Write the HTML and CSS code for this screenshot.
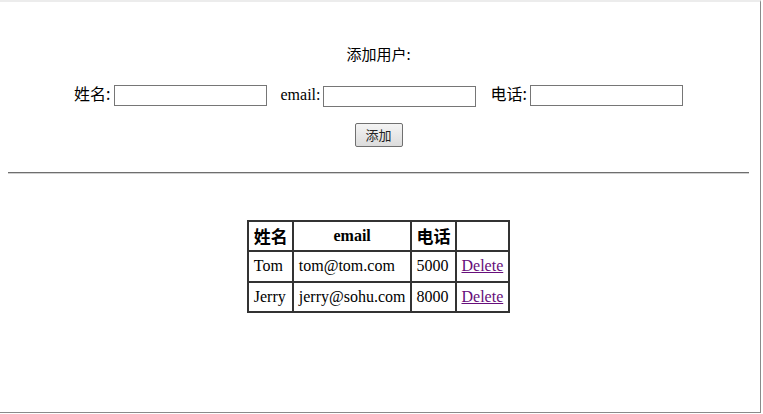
FILE: index.html
```html
<!DOCTYPE html>
<html lang="zh">
<head>
  <meta charset="UTF-8" />
  <title>用户管理</title>
  <link rel="stylesheet" href="styles.css">
</head>
<body>

<div class="frame">
  <div class="add-form">
    <p class="form-title">添加用户:</p>
    <p class="form-fields">
      <label>姓名:<input type="text" /></label>
      <label>email:<input type="text" /></label>
      <label>电话:<input type="text" /></label>
    </p>
    <p class="form-submit"><button>添加</button></p>
  </div>

  <hr />

  <table class="user-table">
    <tr>
      <th>姓名</th>
      <th>email</th>
      <th>电话</th>
      <th></th>
    </tr>
    <tr>
      <td>Tom</td>
      <td>tom@tom.com</td>
      <td>5000</td>
      <td><a href="#">Delete</a></td>
    </tr>
    <tr>
      <td>Jerry</td>
      <td>jerry@sohu.com</td>
      <td>8000</td>
      <td><a href="#">Delete</a></td>
    </tr>
  </table>
</div>

</body>
</html>
```

FILE: styles.css
```css
body {
  margin: 0;
  font-family: "Liberation Serif", "Noto Sans CJK SC", serif;
  font-size: 16px;
  color: #000;
  background-color: #fff;
}

.frame {
  box-sizing: border-box;
  width: 761px;
  height: 413px;
  padding: 0 11px 0 8px;
  border-top: 2px solid #ececec;
  border-right: 1px solid #8a8a8a;
  border-bottom: 1px solid #8a8a8a;
}

.add-form {
  text-align: center;
}

.form-title {
  margin: 42px 0 0;
  line-height: 20px;
  font-family: "Noto Sans CJK SC", sans-serif;
  font-size: 15px;
}

.form-fields {
  margin: 18px 0 0;
  line-height: 22px;
}

.form-fields label {
  margin: 0 5px;
}

.form-fields label:first-child,
.form-fields label:last-child {
  font-family: "Noto Sans CJK SC", sans-serif;
  font-size: 16px;
}

.form-fields input {
  box-sizing: border-box;
  width: 153px;
  height: 21px;
  margin-left: 3px;
  border: 1px solid #767676;
  vertical-align: middle;
}

.form-submit {
  margin: 16px 0 0;
}

.form-submit button {
  width: 48px;
  height: 24px;
  padding: 0;
  font-family: "Noto Sans CJK SC", sans-serif;
  font-size: 13px;
  color: #222;
  background: linear-gradient(#f4f4f4, #dcdcdc);
  border: 1px solid #707070;
  border-radius: 2px;
}

hr {
  margin: 25px 0 0;
  height: 0;
  border: none;
  border-top: 1px solid #6e6e6e;
  border-bottom: 1px solid #d0d0d0;
}

.user-table {
  margin: 46px auto 0;
  border-collapse: separate;
  border-spacing: 0;
  border: 1px solid #333;
}

.user-table th,
.user-table td {
  border: 1px solid #333;
  padding: 5px 4.5px;
  line-height: 18.4px;
  text-align: left;
}

.user-table th {
  text-align: center;
}

.user-table th:first-child,
.user-table th:nth-child(3) {
  font-family: "Noto Sans CJK SC", sans-serif;
  font-size: 17px;
}

.user-table a {
  color: #660e7a;
}
```
